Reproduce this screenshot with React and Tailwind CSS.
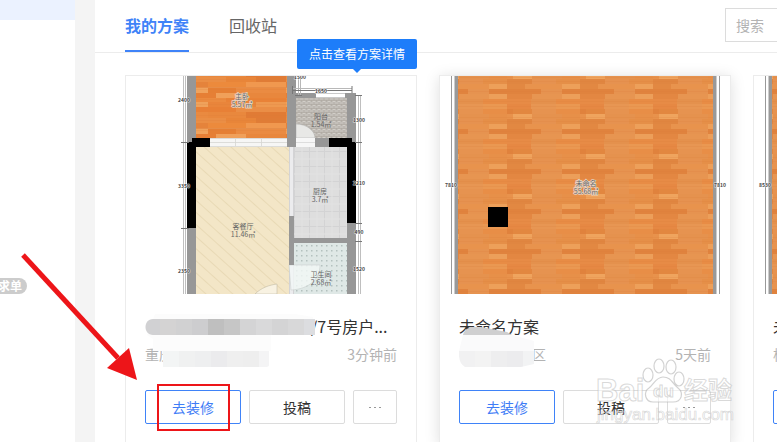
import { clsx } from 'clsx';

const WOOD = [
  // x, y, width, height, fill
  [0, 0, 25, 5, '#e08641'], [25, 0, 24, 5, '#e69250'], [49, 0, 24, 5, '#e58f48'],
  [0, 5, 18, 5, '#e28842'], [18, 5, 37, 5, '#e8934d'], [55, 5, 18, 5, '#eda05a'],
  [0, 10, 34, 5, '#e0833e'], [34, 10, 21, 5, '#e69350'], [55, 10, 18, 5, '#e0833e'],
  [0, 15, 25, 5, '#e38742'], [25, 15, 30, 5, '#e79551'], [55, 15, 18, 5, '#ec9f5a'],
  [0, 20, 24, 5, '#e78b46'], [24, 20, 25, 5, '#e4914d'], [49, 20, 24, 5, '#e88c45'],
  [0, 25, 24, 5, '#e68843'], [24, 25, 25, 5, '#e79653'], [49, 25, 24, 5, '#ea9852'],
  [0, 30, 6, 5, '#e0823d'], [6, 30, 19, 5, '#e28740'], [25, 30, 24, 5, '#e69350'], [49, 30, 24, 5, '#e88e47'],
  [0, 35, 6, 5, '#e8924c'], [6, 35, 19, 5, '#efa45e'], [25, 35, 30, 5, '#e5924e'], [55, 35, 18, 5, '#e79049'],
];

const BEDROOM_WOOD = [
  [0, 0, 30, 5, '#ea8e45'], [30, 0, 30, 5, '#e88539'], [60, 0, 30, 5, '#e07c36'],
  [0, 5, 12, 5, '#e5833b'], [12, 5, 38, 5, '#ec8a3c'], [50, 5, 40, 5, '#f0984f'],
  [0, 11, 12, 5, '#f0a35d'], [12, 11, 28, 5, '#e57f34'], [40, 11, 50, 5, '#ea8b42'],
  [0, 16, 20, 5, '#e67f35'], [20, 16, 30, 5, '#f0a05a'], [50, 16, 40, 5, '#e8873d'],
  [0, 21, 30, 5, '#eb8b40'], [30, 21, 60, 5, '#e98237'],
  [0, 25, 12, 5, '#efa25b'], [12, 25, 48, 5, '#e9853b'], [60, 25, 30, 5, '#ee9950'],
  [0, 30, 40, 5, '#e88036'], [40, 30, 50, 5, '#ea8e46'],
  [0, 35, 12, 6, '#ea8a40'], [12, 35, 38, 6, '#e9883d'], [50, 35, 40, 6, '#e17b35'],
];

function WoodPattern({ id, x, y, width = 73, height = 40, planks = WOOD }) {
  return (
    <pattern id={id} x={x} y={y} width={width} height={height} patternUnits="userSpaceOnUse">
      <rect width={width} height={height} fill="#e68d48" />
      {planks.map(([px, py, w, h, fill]) => (
        <rect key={`${px}-${py}`} x={px} y={py} width={w} height={h} fill={fill} />
      ))}
      {[2, 12, 22, 27, 38].map((ly) => (
        <path key={ly} d={`M0 ${ly}.5H${width}`} stroke="#d87a38" strokeOpacity="0.18" />
      ))}
    </pattern>
  );
}

function RoomLabel({ x, y, name, area, halo }) {
  return (
    <g
      textAnchor="middle"
      fill="#666"
      stroke={halo ? '#e9d5c3' : 'none'}
      strokeWidth={halo ? 1.5 : 0}
      paintOrder="stroke"
    >
      <text x={x} y={y} fontSize="7">{name}</text>
      <text x={x} y={y + 8} fontSize="7">{area}</text>
    </g>
  );
}

function Dim({ x, y, children }) {
  return (
    <text x={x} y={y} fontSize="5" fontWeight="700" textAnchor="middle" fill="#444" stroke="#fff" strokeWidth="1" strokeOpacity="0.7" paintOrder="stroke">
      {children}
    </text>
  );
}

function HousePlan() {
  return (
    <svg viewBox="0 0 290 218" className="block w-full">
      <defs>
        <WoodPattern id="bedroom-wood" x="70" y="1" width={90} height={41} planks={BEDROOM_WOOD} />
        <pattern id="living" width="9" height="9" patternUnits="userSpaceOnUse" patternTransform="rotate(42)">
          <rect width="9" height="9" fill="#f3e6c7" />
          <path d="M0 .5H9" stroke="#e8d9b5" />
        </pattern>
        <pattern id="balcony" width="5" height="4" patternUnits="userSpaceOnUse">
          <rect width="5" height="4" fill="#c3bfb9" />
          <path d="M0 .5H5M.5 0V2M3 2V4" stroke="#afa9a2" strokeWidth=".7" />
          <rect x="2" y="1" width="2" height="1" fill="#d2cec8" />
        </pattern>
        <pattern id="kitchen" x="168" y="75" width="15" height="15" patternUnits="userSpaceOnUse">
          <rect width="15" height="15" fill="#dedede" />
          <path d="M0 .5H15M.5 0V15" stroke="#d3d3d4" />
          <path d="M8 0V15M0 8H15" stroke="#e3e3e3" />
        </pattern>
        <pattern id="bath" x="168" y="168" width="5" height="5" patternUnits="userSpaceOnUse">
          <rect width="5" height="5" fill="#dfe8e6" />
          <rect x="2" y="1" width="1.5" height="1.5" fill="#b3c1be" />
        </pattern>
      </defs>

      {/* floors */}
      <rect x="70" width="91" height="62" fill="url(#bedroom-wood)" />
      <rect x="70" y="71" width="93" height="147" fill="url(#living)" />
      <rect x="170" y="22" width="51" height="40" fill="url(#balcony)" />
      <rect x="168" y="71" width="53" height="91" fill="url(#kitchen)" />
      <rect x="168" y="167" width="53" height="51" fill="url(#bath)" />

      {/* windows and doors */}
      <rect x="84" y="62" width="77" height="9" fill="#f6f6f5" />
      <path d="M84 62.5H161M84 66.5H161M84 70.5H161M109.5 63V70M135.5 63V70" stroke="#d6d6d2" fill="none" strokeWidth=".8" />
      <rect x="163" y="71" width="5" height="147" fill="#ececee" />
      <path d="M163.5 71V218M167.5 71V218" stroke="#c9c9ca" strokeWidth=".7" />
      <path d="M170 48C181 48 189 55 189 62H170Z" fill="#e8e8e6" stroke="#aaa" strokeWidth=".5" />
      <rect x="170" y="62" width="19" height="9" fill="#f7f7f7" />
      <path d="M170 66.500H189" stroke="#ddd" />
      <path d="M163 189H194C194 203 183 213 165 214Z" fill="#f3f7f6" fillOpacity=".8" stroke="#c4cac9" strokeWidth=".5" />
      <path d="M129 218C135 212 143 209 151 208V218Z" fill="#f8f2e2" stroke="#b9b29d" strokeWidth=".5" />

      {/* walls */}
      <g fill="#979797">
        <rect x="61" width="9" height="66" />
        <rect x="61" y="152" width="9" height="66" />
        <rect x="161" width="9" height="71" />
        <rect x="170" y="17" width="20" height="5" />
        <rect x="219" y="17" width="11" height="5" />
        <rect x="221" y="17" width="9" height="49" />
        <rect x="189" y="62" width="14" height="9" />
        <rect x="221" y="147" width="9" height="71" />
        <rect x="163" y="140" width="5" height="49" />
        <rect x="163" y="162" width="58" height="5" />
      </g>
      <path d="M190 17.500H219M190 21.500H219" stroke="#bbb" strokeWidth=".8" />
      <path d="M66 62H84V71H70V152H61V66H66ZM203 62H226V66H230V147H221V71H203Z" fill="#000" />

      {/* dimensions */}
      <g stroke="#b8b8b8" fill="none">
        <path d="M57.500 0V218M59.500 0V218" strokeWidth=".9" />
        <path d="M232.500 19V218M234.500 19V218" strokeWidth=".9" />
        <path d="M166 12.500H226M172.500 0V19M174.500 0V19" />
      </g>
      <path d="M55 66.500H63M55 152.500H63M229 19.500H236M229 66.500H236M229 147.500H236M229 165.500H236M166.500 10V18M226 10V17M169 19.500H176M166 14.500H226" stroke="#777" fill="none" />
      <Dim x="58" y="26">2400</Dim>
      <Dim x="58" y="112">3350</Dim>
      <Dim x="58" y="197">2350</Dim>
      <Dim x="195" y="17">1650</Dim>
      <Dim x="174" y="3">1500</Dim>
      <Dim x="233" y="46">1300</Dim>
      <Dim x="233" y="109">2210</Dim>
      <Dim x="233" y="158">490</Dim>
      <Dim x="233" y="195">1520</Dim>

      <RoomLabel x={116} y={23} name="主卧" area="5.57㎡" halo />
      <RoomLabel x={195} y={43} name="阳台" area="1.54㎡" />
      <RoomLabel x={117} y={153} name="客餐厅" area="11.46㎡" />
      <RoomLabel x={194} y={118} name="厨房" area="3.7㎡" />
      <RoomLabel x={195} y={201} name="卫生间" area="2.68㎡" />
    </svg>
  );
}

function RoomPlan({ id, left, right, size, column }) {
  return (
    <svg viewBox="0 0 290 218" className="block w-full">
      <defs>
        <WoodPattern id={id} x="-6" y="3" />
      </defs>
      <rect x={left} width={right - left} height="218" fill={`url(#${id})`} />
      <rect x={left - 3} width="3" height="218" fill="#999" />
      <rect x={right} width="3" height="218" fill="#999" />
      <path d={`M${left - 6.5} 0V218M${right + 6.5} 0V218`} stroke="#999" />
      <path d={`M${left - 3.5} 0V218M${right + 3.5} 0V218`} stroke="#ccc" />
      {column && <rect x="48" y="131" width="20" height="20" fill="#000" />}
      <Dim x={left - 7} y="111">{size}</Dim>
      <Dim x={right + 7} y="111">{size}</Dim>
      <RoomLabel x={146} y={110} name="未命名" area="55.68㎡" halo />
    </svg>
  );
}

/* pixelated cover over the private part of a title and address */
function LongMask() {
  const top = ['#d1d1d3', '#d4d3d3', '#d1d1d2', '#cdcdcf', '#bfbfbf', '#c6c6c6', '#d4d4d5', '#d9d9da', '#d4d4d5', '#d8d8d9', '#dcdde0'];
  const low = ['#f3f5f5', '#f0f1f1', '#eeeff0', '#ebebed', '#efefef', '#eeeeee', '#f4f4f5'];
  return (
    <svg viewBox="0 0 172 56" className="absolute left-0 top-0 w-[172px]">
      <clipPath id="long-top"><path d="M8 5H170V21H8C-2 21-2 5 8 5Z" /></clipPath>
      <path d="M10 0H150L168 3V21H126V37H8V25L2 21Z" fill="#fcfcfc" />
      <g clipPath="url(#long-top)">
        {top.map((c, i) => <rect key={i} x={i * 16 - 1} y="5" width="16" height="16" fill={c} />)}
      </g>
      <clipPath id="long-low"><path d="M18 37H124V51Q124 53 120 53H18Z" /></clipPath>
      <g clipPath="url(#long-low)">
        {low.map((c, i) => <rect key={i} x={i * 16 + 18} y="37" width="16" height="16" fill={c} />)}
      </g>
    </svg>
  );
}

function ShortMask() {
  const low = ['#f1f1f2', '#f3f3f3', '#eeeeef', '#ececee', '#f2f3f4'];
  return (
    <svg viewBox="0 0 80 56" className="absolute left-0 top-0 w-[80px]">
      <path d="M4 21C6 12 15 13 22 13L48 18L53 21Z" fill="#cfcfd0" />
      <path d="M4 21H53L75 27V37H0Z" fill="#fafafb" />
      <clipPath id="short-low"><path d="M0 37H75V50L62 53H6Q-1 49 0 37Z" /></clipPath>
      <g clipPath="url(#short-low)">
        {low.map((c, i) => <rect key={i} x={i * 16} y="37" width="16" height="16" fill={c} />)}
      </g>
    </svg>
  );
}

function Card({ plan, title, titleClass, place, placeClass, time, mask, raised, tip }) {
  return (
    <article
      className={clsx(
        'relative w-[292px] shrink-0 border border-[#ececec] bg-white',
        raised && 'shadow-[0_2px_14px_rgba(0,0,0,0.13)]'
      )}
    >
      {tip && (
        <div role="tooltip" className="absolute -right-px -top-[37px] flex h-[30px] w-[120px] items-center justify-center rounded-xs bg-[#1d7dfa] text-xs text-white">
          {tip}
          <span className="absolute left-1/2 top-full -translate-x-1/2 border-x-4 border-t-4 border-x-transparent border-t-[#1d7dfa]" />
        </div>
      )}
      {plan}
      <div className="px-[19px] pb-5 pt-5">
        <div className="relative">
          <h3 className={clsx('whitespace-nowrap text-base leading-6 text-[#333]', titleClass)}>{title}</h3>
          <div className="mt-1 flex justify-between text-sm leading-6 text-[#b3b3b3]">
            <span className={placeClass}>{place}</span>
            <span>{time}</span>
          </div>
          {mask}
        </div>
        <div className="mt-6 flex gap-2 text-sm">
          <button className="h-[34px] flex-1 rounded-xs border border-[#3f83f8] text-[#3f7df6]">去装修</button>
          <button className="h-[34px] flex-1 rounded-xs border border-[#dcdcdc] text-[#333]">投稿</button>
          <button aria-label="更多" className="flex h-[34px] w-11 items-center justify-center gap-[3px] rounded-xs border border-[#dcdcdc]">
            <i className="h-px w-[2px] bg-[#999]" />
            <i className="h-px w-[2px] bg-[#999]" />
            <i className="h-px w-[2px] bg-[#999]" />
          </button>
        </div>
      </div>
    </article>
  );
}

function Watermark() {
  return (
    <svg viewBox="0 0 144 72" className="pointer-events-none absolute left-[594px] top-[355px] w-[144px]">
      <g fill="#fff" fillOpacity=".6" stroke="#b4b4b4" strokeOpacity=".6" strokeWidth="1.2">
        <ellipse cx="54" cy="20" rx="5" ry="7" />
        <ellipse cx="65" cy="11" rx="5" ry="7" />
        <ellipse cx="77" cy="12" rx="5" ry="7" />
        <ellipse cx="85" cy="24" rx="5" ry="7" />
        <path d="M69 22C62 22 60 29 55 33C49 37 51 47 59 47H79C88 47 90 38 84 33C78 28 77 22 69 22Z" />
      </g>
      <g fill="#fff" fillOpacity=".6" stroke="#b4b4b4" strokeOpacity=".5" strokeWidth="1" fontWeight="700" className="font-['Liberation_Sans','Noto_Sans_CJK_SC',sans-serif]">
        <text x="2" y="46" fontSize="31">Bai</text>
        <text x="59" y="42" fontSize="17">du</text>
        <text x="90" y="44" fontSize="24">经验</text>
        <text x="3" y="65" fontSize="17" fontWeight="400" strokeWidth=".7">jingyan.baidu.com</text>
      </g>
    </svg>
  );
}

export default function App() {
  return (
    <div className="relative flex h-screen overflow-hidden bg-[#f4f4f4] font-['Noto_Sans_CJK_SC',sans-serif]">
      {/* SIDEBAR */}
      <aside className="flex w-[75px] shrink-0 flex-col bg-white">
        <div className="h-5 bg-[#ebf2ff]" />
        <div className="mt-[258px] flex justify-end pr-12">
          <span className="flex h-4 shrink-0 items-center rounded-full bg-[#ccc] px-[5px] text-xs font-bold text-white">求单</span>
        </div>
      </aside>

      {/* MAIN */}
      <main className="ml-5 min-w-0 flex-1 overflow-hidden bg-white">
        <header className="flex h-[53px] justify-between border-b border-[#ececec] pl-[30px]">
          <nav className="flex shrink-0 gap-10 text-base">
            <button className="h-[52px] border-b-2 border-[#3f83f8] font-bold text-[#3f83f8]">我的方案</button>
            <button className="h-[52px] border-b-2 border-transparent text-[#666]">回收站</button>
          </nav>
          <input
            aria-label="搜索"
            placeholder="搜索"
            className="-mr-[150px] mt-2 h-[34px] w-[202px] shrink-0 border border-[#dcdcdc] px-[10px] text-sm outline-none placeholder:text-[#b3b3b3]"
          />
        </header>

        <section className="mt-[22px] flex gap-[22px] pl-[30px]">
          <Card
            plan={<HousePlan />}
            title="/7号房户..."
            titleClass="pl-[166px]"
            place="重庆"
            time="3分钟前"
            mask={<LongMask />}
            tip="点击查看方案详情"
          />
          <Card
            plan={<RoomPlan id="wood-a" left={18} right={273} size="7810" column />}
            title="未命名方案"
            place="区"
            placeClass="pl-[73px]"
            time="5天前"
            mask={<ShortMask />}
            raised
          />
          <Card
            plan={<RoomPlan id="wood-b" left={18} right={273} size="8530" />}
            title="未命名方案"
            place="杭州"
            time="5天前"
          />
        </section>
      </main>

      <Watermark />

      {/* click hint */}
      <svg viewBox="0 0 120 130" className="pointer-events-none absolute left-5 top-[252px] w-[120px]">
        <path d="M3 3L98 106" stroke="#ed1519" strokeWidth="5" />
        <path d="M109 96L87 116L117 128Z" fill="#ed1519" />
      </svg>
      <div className="pointer-events-none absolute left-[157px] top-[384px] h-[47px] w-[73px] border-2 border-[#ed1519]" />
    </div>
  );
}
